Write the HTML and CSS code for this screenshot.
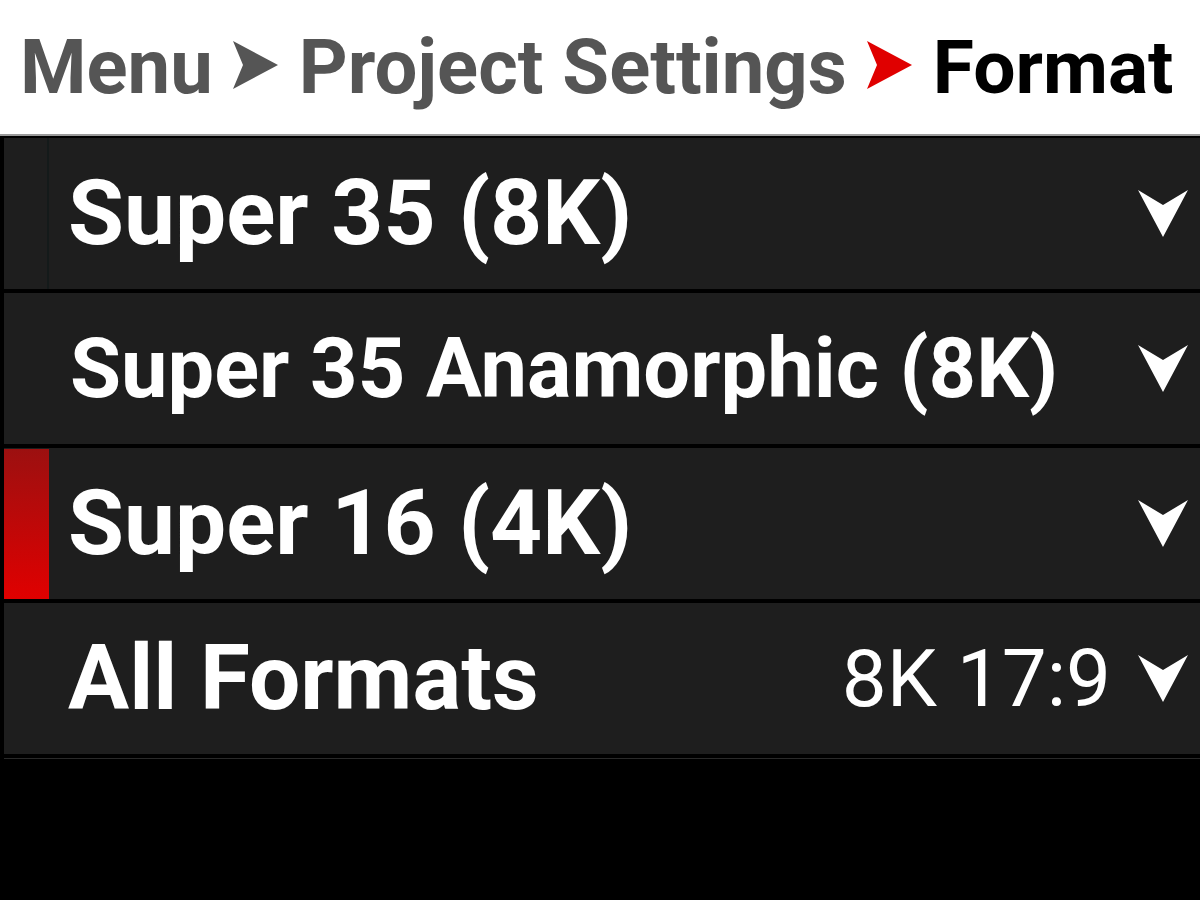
FILE: index.html
```html
<!DOCTYPE html>
<html>
<head>
<meta charset="utf-8">
<link rel="stylesheet" href="styles.css">
</head>
<body>
<header class="crumbs">
  <span class="crumb">Menu</span>
  <svg class="sep" width="46" height="49" viewBox="0 0 46 49"><path d="M0 0 L45 24 L0 48 L10 24 Z" fill="#555"/></svg>
  <span class="crumb">Project Settings</span>
  <svg class="sep" width="46" height="49" viewBox="0 0 46 49"><path d="M0 0 L45 24 L0 48 L10 24 Z" fill="#e00000"/></svg>
  <span class="crumb current">Format</span>
</header>
<main class="list">
  <div class="row">
    <div class="mark first"></div>
    <div class="label">Super 35 (8K)</div>
    <svg class="drop" viewBox="0 0 50 48"><path d="M0 0 L25 15 L50 0 L25 47 Z" fill="#fff"/></svg>
  </div>
  <div class="row">
    <div class="mark"></div>
    <div class="label small">Super 35 Anamorphic (8K)</div>
    <svg class="drop" viewBox="0 0 50 48"><path d="M0 0 L25 15 L50 0 L25 47 Z" fill="#fff"/></svg>
  </div>
  <div class="row">
    <div class="mark active"></div>
    <div class="label">Super 16 (4K)</div>
    <svg class="drop" viewBox="0 0 50 48"><path d="M0 0 L25 15 L50 0 L25 47 Z" fill="#fff"/></svg>
  </div>
  <div class="row">
    <div class="mark"></div>
    <div class="label">All Formats</div>
    <div class="value">8K 17:9</div>
    <svg class="drop" viewBox="0 0 50 48"><path d="M0 0 L25 15 L50 0 L25 47 Z" fill="#fff"/></svg>
  </div>
  <div class="baseline"></div>
</main>
</body>
</html>
```

FILE: styles.css
```css
html, body {
  margin: 0;
  padding: 0;
  background: #000;
  width: 1200px;
  height: 900px;
  overflow: hidden;
  font-family: Roboto, "Liberation Sans", sans-serif;
}
.crumbs {
  height: 136px;
  background: #fff;
  border-bottom: 2px solid #9a9a9a;
  display: flex;
  align-items: center;
  padding-left: 20px;
  box-sizing: border-box;
}
.crumb {
  font-size: 76px;
  font-weight: 700;
  color: #555;
  line-height: 1;
}
.crumb.current {
  color: #000;
  font-size: 75px;
}
.sep {
  flex: none;
  margin: -4px 20px 0 20px;
}
.list {
  display: flex;
  flex-direction: column;
  gap: 4px;
  padding: 2px 0 0 4px;
}
.row {
  height: 151px;
  background: #1e1e1e;
  display: flex;
  align-items: center;
}
.mark {
  width: 45px;
  align-self: stretch;
  margin-right: 19px;
  flex: none;
}
.mark.first {
  border-right: 2px solid #141a1a;
  width: 43px;
}
.mark.active {
  background: linear-gradient(#9c1010, #e00000);
  margin-top: 1px;
}
.label {
  flex: 1;
  font-size: 91px;
  font-weight: 700;
  color: #fff;
  line-height: 1;
  white-space: nowrap;
}
.label.small {
  font-size: 83px;
  padding-left: 2px;
}
.value {
  font-size: 80px;
  color: #fff;
  line-height: 1;
  margin-right: 27px;
}
.drop {
  width: 50px;
  height: 48px;
  margin-right: 12px;
  flex: none;
}
.baseline {
  height: 1px;
  background: #2a2a2a;
}
```
